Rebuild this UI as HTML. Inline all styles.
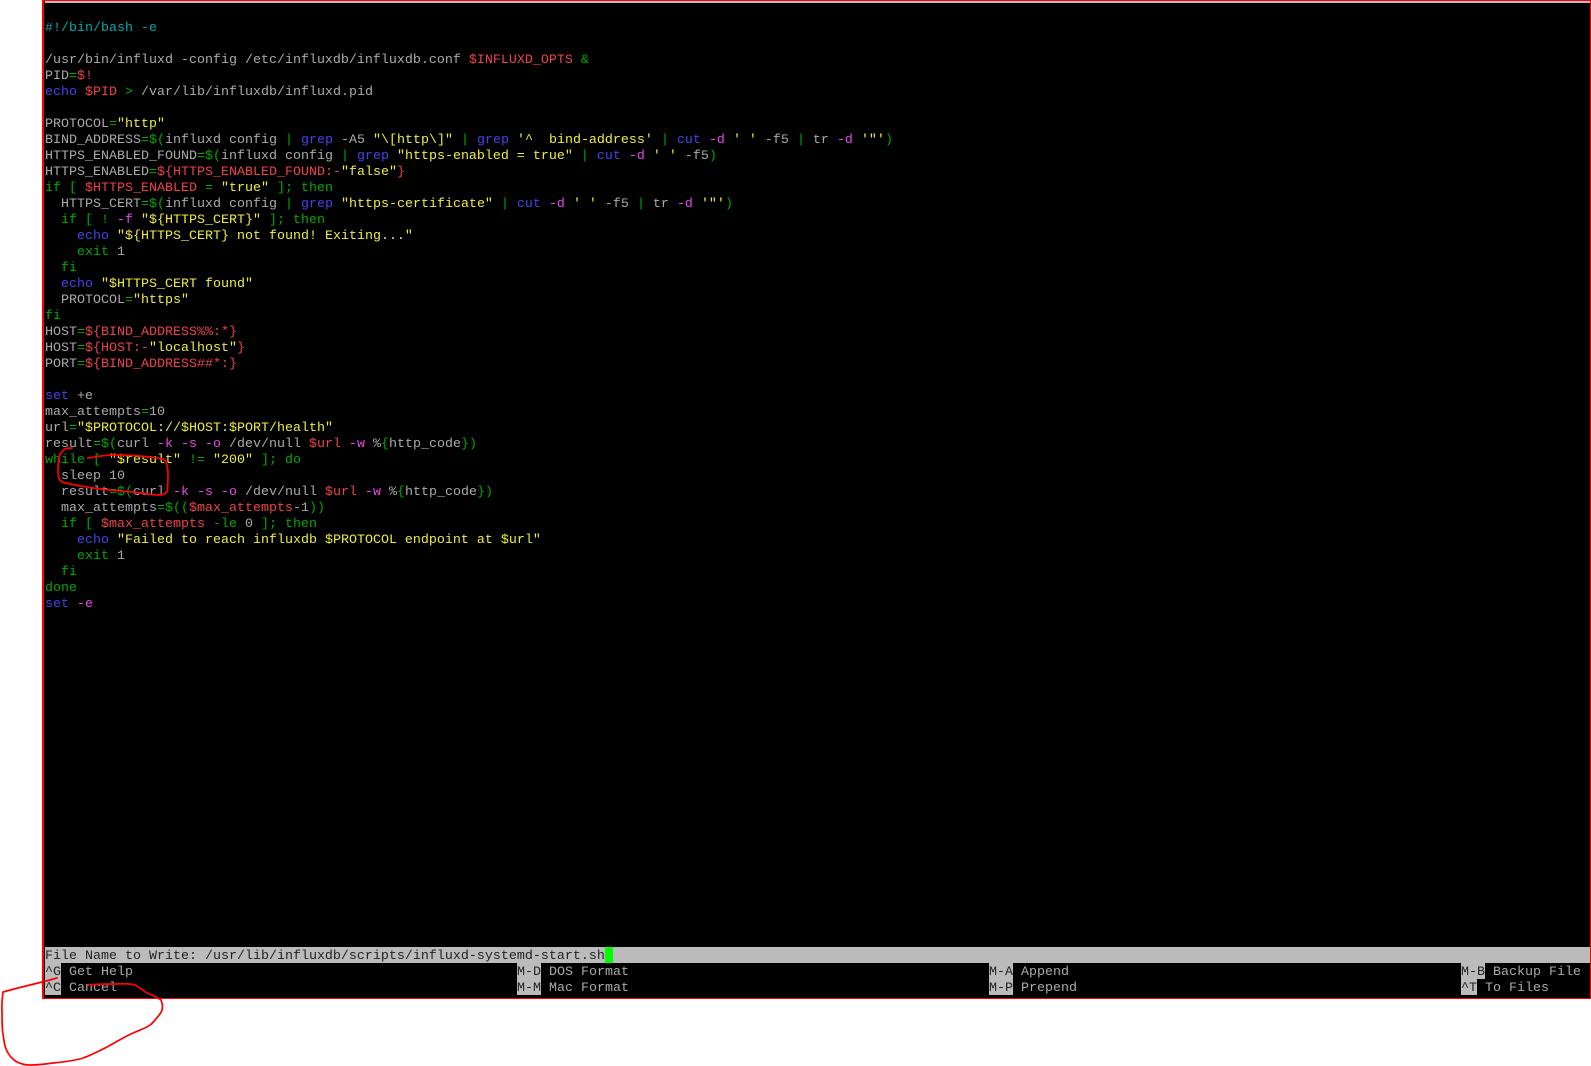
<!DOCTYPE html>
<html><head><meta charset="utf-8"><style>
html,body{margin:0;padding:0;background:#fff;width:1591px;height:1066px;overflow:hidden}
#t{position:absolute;left:42px;top:0;width:1549px;height:999px;background:#000;box-sizing:border-box;border:1px solid #f00;border-left-width:2.5px}
#s{position:absolute;left:44.5px;top:1px;width:1545.5px;height:2px;background:#bbb}
pre{position:absolute;left:45px;top:21px;margin:0;font:13.333px/16px "Liberation Mono",monospace;color:#aaa;white-space:pre}
.c{color:#0aa}.g{color:#0a0}.b{color:#44e}.r{color:#e44}.y{color:#ee4}.m{color:#e4e}
#bar{position:absolute;left:44.5px;top:947px;width:1545.5px;height:16px;background:#bbb}
#cur{position:absolute;left:605px;top:947px;width:8px;height:16px;background:#0f0}
.h{position:absolute;height:16px;background:#bbb}
.k{position:absolute;font:13.333px/16px "Liberation Mono",monospace;white-space:pre;color:#aaa}
.d{color:#222}
svg{position:absolute;left:0;top:0}
</style></head><body>
<div id="t"></div><div id="s"></div>
<pre><span class="c">#!/bin/bash -e</span>

/usr/bin/influxd -config /etc/influxdb/influxdb.conf <span class="r">$INFLUXD_OPTS</span> <span class="g">&amp;</span>
PID<span class="g">=</span><span class="r">$!</span>
<span class="b">echo</span> <span class="r">$PID</span> <span class="g">&gt;</span> /var/lib/influxdb/influxd.pid

PROTOCOL<span class="g">=</span><span class="y">"http"</span>
BIND_ADDRESS<span class="g">=$(</span>influxd config <span class="g">|</span> <span class="b">grep</span> -A5 <span class="y">"\[http\]"</span> <span class="g">|</span> <span class="b">grep</span> <span class="y">'^  bind-address'</span> <span class="g">|</span> <span class="b">cut</span> <span class="m">-d</span> <span class="y">' '</span> -f5 <span class="g">|</span> tr <span class="m">-d</span> <span class="y">'"'</span><span class="g">)</span>
HTTPS_ENABLED_FOUND<span class="g">=$(</span>influxd config <span class="g">|</span> <span class="b">grep</span> <span class="y">"https-enabled = true"</span> <span class="g">|</span> <span class="b">cut</span> <span class="m">-d</span> <span class="y">' '</span> -f5<span class="g">)</span>
HTTPS_ENABLED<span class="g">=</span><span class="r">${HTTPS_ENABLED_FOUND:-</span><span class="y">"false"</span><span class="r">}</span>
<span class="g">if [ </span><span class="r">$HTTPS_ENABLED</span> <span class="g">=</span> <span class="y">"true"</span><span class="g"> ]; then</span>
  HTTPS_CERT<span class="g">=$(</span>influxd config <span class="g">|</span> <span class="b">grep</span> <span class="y">"https-certificate"</span> <span class="g">|</span> <span class="b">cut</span> <span class="m">-d</span> <span class="y">' '</span> -f5 <span class="g">|</span> tr <span class="m">-d</span> <span class="y">'"'</span><span class="g">)</span>
  <span class="g">if [ ! </span><span class="m">-f</span> <span class="y">"${HTTPS_CERT}"</span><span class="g"> ]; then</span>
    <span class="b">echo</span> <span class="y">"${HTTPS_CERT} not found! Exiting..."</span>
    <span class="g">exit</span> 1
  <span class="g">fi</span>
  <span class="b">echo</span> <span class="y">"$HTTPS_CERT found"</span>
  PROTOCOL<span class="g">=</span><span class="y">"https"</span>
<span class="g">fi</span>
HOST<span class="g">=</span><span class="r">${BIND_ADDRESS%%:*}</span>
HOST<span class="g">=</span><span class="r">${HOST:-</span><span class="y">"localhost"</span><span class="r">}</span>
PORT<span class="g">=</span><span class="r">${BIND_ADDRESS##*:}</span>

<span class="b">set</span> +e
max_attempts<span class="g">=</span>10
url<span class="g">=</span><span class="y">"$PROTOCOL://$HOST:$PORT/health"</span>
result<span class="g">=$(</span>curl <span class="m">-k</span> <span class="m">-s</span> <span class="m">-o</span> /dev/null <span class="r">$url</span> <span class="m">-w</span> %<span class="g">{</span>http_code<span class="g">})</span>
<span class="g">while [ </span><span class="y">"$result"</span> <span class="g">!=</span> <span class="y">"200"</span><span class="g"> ]; do</span>
  sleep 10
  result<span class="g">=$(</span>curl <span class="m">-k</span> <span class="m">-s</span> <span class="m">-o</span> /dev/null <span class="r">$url</span> <span class="m">-w</span> %<span class="g">{</span>http_code<span class="g">})</span>
  max_attempts<span class="g">=$((</span><span class="r">$max_attempts</span>-1<span class="g">))</span>
  <span class="g">if [ </span><span class="r">$max_attempts</span> <span class="g">-le</span> 0<span class="g"> ]; then</span>
    <span class="b">echo</span> <span class="y">"Failed to reach influxdb $PROTOCOL endpoint at $url"</span>
    <span class="g">exit</span> 1
  <span class="g">fi</span>
<span class="g">done</span>
<span class="b">set</span> <span class="m">-e</span></pre>
<div id="bar"></div><div id="cur"></div>
<div class="k d" style="left:45px;top:949px">File Name to Write: /usr/lib/influxdb/scripts/influxd-systemd-start.sh</div>

<div class="h" style="left:45px;top:963px;width:16px"></div><div class="k d" style="left:45px;top:965px">^G</div><div class="k" style="left:69px;top:965px">Get Help</div>
<div class="h" style="left:45px;top:979px;width:16px"></div><div class="k d" style="left:45px;top:981px">^C</div><div class="k" style="left:69px;top:981px">Cancel</div>

<div class="h" style="left:517px;top:963px;width:24px"></div><div class="k d" style="left:517px;top:965px">M-D</div><div class="k" style="left:549px;top:965px">DOS Format</div>
<div class="h" style="left:517px;top:979px;width:24px"></div><div class="k d" style="left:517px;top:981px">M-M</div><div class="k" style="left:549px;top:981px">Mac Format</div>

<div class="h" style="left:989px;top:963px;width:24px"></div><div class="k d" style="left:989px;top:965px">M-A</div><div class="k" style="left:1021px;top:965px">Append</div>
<div class="h" style="left:989px;top:979px;width:24px"></div><div class="k d" style="left:989px;top:981px">M-P</div><div class="k" style="left:1021px;top:981px">Prepend</div>

<div class="h" style="left:1461px;top:963px;width:24px"></div><div class="k d" style="left:1461px;top:965px">M-B</div><div class="k" style="left:1493px;top:965px">Backup File</div>
<div class="h" style="left:1461px;top:979px;width:16px"></div><div class="k d" style="left:1461px;top:981px">^T</div><div class="k" style="left:1485px;top:981px">To Files</div>

<svg width="1591" height="1066" fill="none" stroke="#f00" stroke-width="1.7" stroke-linejoin="round" stroke-linecap="round">
<path d="M57 978 C40 983 20 987 3 992 C2 1000 1.5 1005 2 1012 C2 1022 2 1030 3 1034 C4 1042 5 1048 8 1053 C11 1058 14 1060 17 1062 C21 1064 25 1065 30 1065 C38 1065 46 1064 53 1063 C63 1062 74 1061 83 1058 C92 1055 99 1051 107 1047 C116 1042 124 1037 133 1033 C140 1030 146 1028 150 1025 C153 1023 154 1021 155 1020 C158 1016 161 1014 162 1010 C163 1006 162 1003 161 1000 C157 997 152 995 147 993 C142 990 139 987 135 985 C128 983 120 984 113 984 C104 984 96 984 88 985"/>
<path d="M88 458 C98 456 107 455 117 455 C128 455 140 456 150 457 C156 458 161 458 165 460 C167 464 168 468 168 473 C168 480 168 486 167 492 C165 494 163 495 160 495 C151 495 142 493 133 492 C120 491 106 490 93 488 C82 486 72 485 62 482 C59 480 58 477 58 473 C58 467 58 462 59 457 C60 453 62 451 65 449 C67 448 70 448 72 448"/>
</svg>
</body></html>
